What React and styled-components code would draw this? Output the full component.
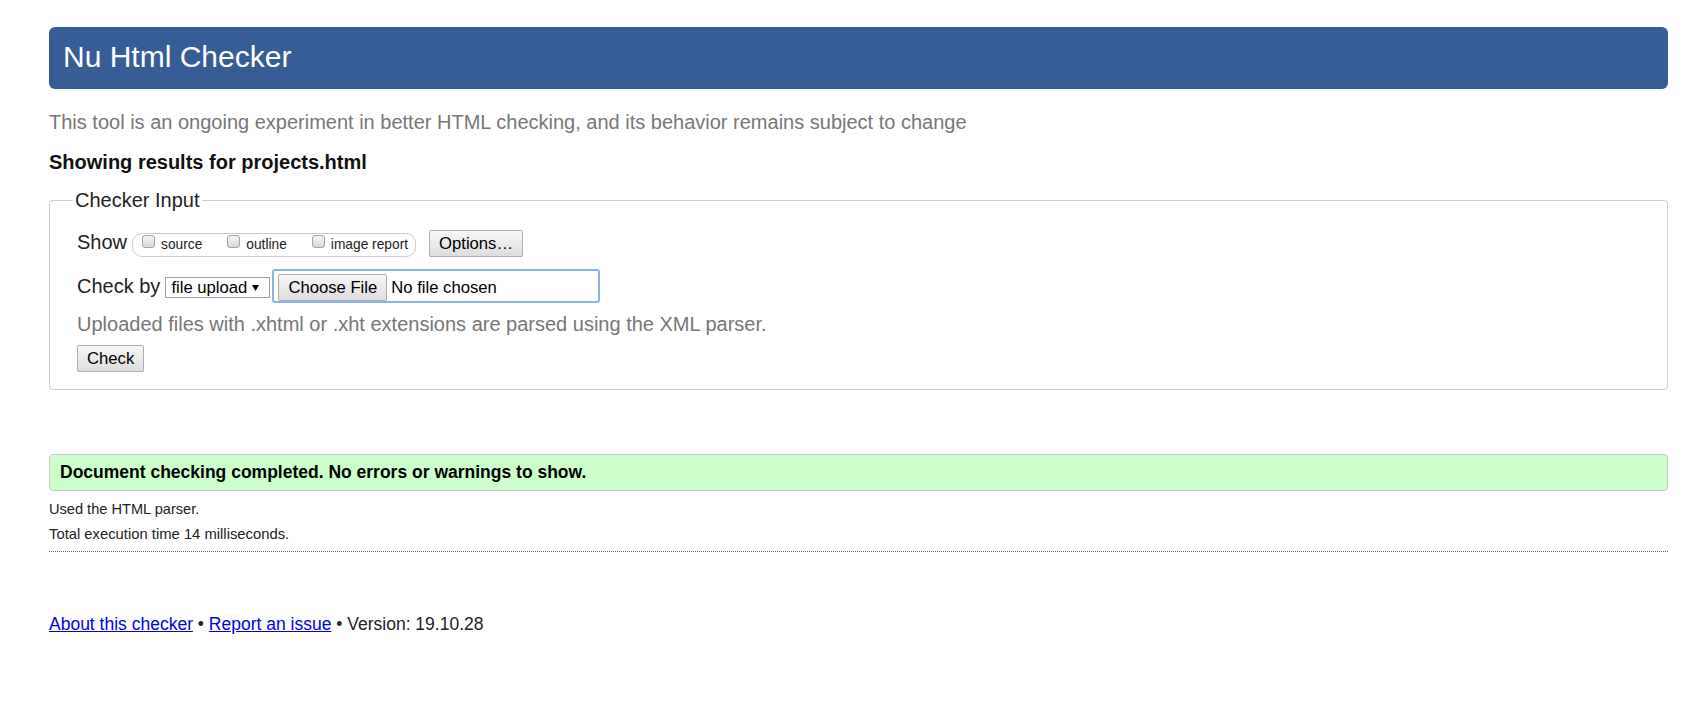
import React from "react";
import styled, { createGlobalStyle } from "styled-components";

const Global = createGlobalStyle`
  html, body { margin: 0; padding: 0; background: #fff; }
  body {
    font-family: "Liberation Sans", Arial, sans-serif;
    color: #222;
  }
  * { box-sizing: border-box; }
`;

const Page = styled.div`
  padding: 27px 29px 40px 49px;
`;

const Header = styled.h1`
  margin: 0;
  background: #365d95;
  color: #fff;
  font-size: 30px;
  font-weight: normal;
  line-height: 35px;
  padding: 12px 14px 15px;
  border-radius: 6px;
`;

const Intro = styled.p`
  margin: 22px 0 0;
  font-size: 20px;
  line-height: 23px;
  color: #777;
`;

const ResultsFor = styled.p`
  margin: 17px 0 0;
  font-size: 20px;
  line-height: 23px;
  font-weight: bold;
  color: #111;
`;

const Fieldset = styled.fieldset`
  margin: 15px 0 0;
  padding: 18px 27px 17px;
  border: 1px solid #ccc;
  border-radius: 4px;
  min-width: 0;
`;

const Legend = styled.legend`
  padding: 0 2px;
  margin-left: -4px;
  font-size: 20px;
  line-height: 23px;
`;

const Row = styled.div`
  display: flex;
  align-items: baseline;
  margin-top: ${(p) => p.$gap || 0}px;
`;

const FieldLabel = styled.span`
  font-size: 20px;
  line-height: 23px;
`;

const OptionGroup = styled.div`
  display: flex;
  align-items: baseline;
  height: 24px;
  margin-left: 5px;
  padding: 0 7px 0 9px;
  border: 1px solid #ccc;
  border-radius: 10px;
`;

const Option = styled.label`
  display: flex;
  align-items: baseline;
  margin-left: ${(p) => (p.$first ? 0 : 25)}px;
`;

const Box = styled.span`
  align-self: flex-end;
  width: 13px;
  height: 13px;
  margin: 0 6px 5px 0;
  border: 1px solid #a2a2a2;
  border-radius: 3px;
  background: linear-gradient(#f3f3f3, #dadada);
`;

const OptionText = styled.span`
  font-size: 13.75px;
  line-height: 16px;
  padding-top: 3px;
  color: #222;
`;

const Button = styled.button`
  height: 27px;
  padding: 0 9px;
  margin-left: ${(p) => p.$ml || 0}px;
  border: 1px solid #adadad;
  border-radius: 2px;
  background: linear-gradient(#f7f7f7, #dddddd);
  font-family: "Liberation Sans", Arial, sans-serif;
  font-size: 16.67px;
  line-height: 25px;
  color: #000;
  white-space: nowrap;
`;

const Select = styled.div`
  display: flex;
  align-items: baseline;
  justify-content: space-between;
  width: 105px;
  height: 21px;
  margin-left: 5px;
  padding: 0 10px 0 5px;
  border: 1px solid #a0a0a0;
  background: #fff;
  font-size: 16.67px;
  line-height: 19px;
  color: #000;
`;

const Arrow = styled.svg`
  align-self: center;
  width: 7px;
  height: 6px;
`;

const FileBox = styled.div`
  display: flex;
  align-items: baseline;
  width: 328px;
  height: 34px;
  margin-left: 2px;
  padding: 3px 5px 0 4px;
  border: 2px solid #8cb2ec;
  border-radius: 3px;
`;

const FileStatus = styled.span`
  margin-left: 4px;
  font-size: 16.67px;
  line-height: 19px;
  color: #000;
`;

const Hint = styled.p`
  margin: 10px 0 0;
  font-size: 20px;
  line-height: 23px;
  color: #777;
`;

const ButtonRow = styled.div`
  margin-top: 9px;
  display: flex;
`;

const Success = styled.div`
  margin-top: 64px;
  padding: 7px 10px 8px;
  border: 1px solid #c9c9c9;
  border-radius: 4px;
  background: #ccffcc;
  font-size: 17.5px;
  line-height: 20px;
  font-weight: bold;
  color: #000;
`;

const Detail = styled.p`
  margin: ${(p) => p.$top}px 0 0;
  font-size: ${(p) => p.$size}px;
  line-height: 17px;
  color: #222;
`;

const Rule = styled.hr`
  margin: 8px 0 0;
  border: 0;
  border-top: 1px dotted #666;
  height: 0;
`;

const Footer = styled.p`
  margin: 62px 0 0;
  font-size: 17.5px;
  line-height: 20px;
  color: #222;
`;

const Link = styled.a`
  color: #0000ee;
  text-decoration: underline;
`;

export default function App() {
  return (
    <>
      <Global />
      <Page>
        <Header>Nu Html Checker</Header>
        <Intro>
          This tool is an ongoing experiment in better HTML checking, and its
          behavior remains subject to change
        </Intro>
        <ResultsFor>Showing results for projects.html</ResultsFor>
        <Fieldset>
          <Legend>Checker Input</Legend>
          <Row>
            <FieldLabel>Show</FieldLabel>
            <OptionGroup>
              <Option $first>
                <Box />
                <OptionText>source</OptionText>
              </Option>
              <Option>
                <Box />
                <OptionText>outline</OptionText>
              </Option>
              <Option>
                <Box />
                <OptionText>image report</OptionText>
              </Option>
            </OptionGroup>
            <Button $ml={13}>Options…</Button>
          </Row>
          <Row $gap={12}>
            <FieldLabel>Check by</FieldLabel>
            <Select>
              <span>file upload</span>
              <Arrow viewBox="0 0 7 6">
                <polygon points="0,0 7,0 3.5,6" fill="#000" />
              </Arrow>
            </Select>
            <FileBox>
              <Button>Choose File</Button>
              <FileStatus>No file chosen</FileStatus>
            </FileBox>
          </Row>
          <Hint>
            Uploaded files with .xhtml or .xht extensions are parsed using the
            XML parser.
          </Hint>
          <ButtonRow>
            <Button>Check</Button>
          </ButtonRow>
        </Fieldset>
        <Success>
          Document checking completed. No errors or warnings to show.
        </Success>
        <Detail $top={10} $size={14.6}>
          Used the HTML parser.
        </Detail>
        <Detail $top={8} $size={14.8}>
          Total execution time 14 milliseconds.
        </Detail>
        <Rule />
        <Footer>
          <Link href="#">About this checker</Link> •{" "}
          <Link href="#">Report an issue</Link> • Version: 19.10.28
        </Footer>
      </Page>
    </>
  );
}
